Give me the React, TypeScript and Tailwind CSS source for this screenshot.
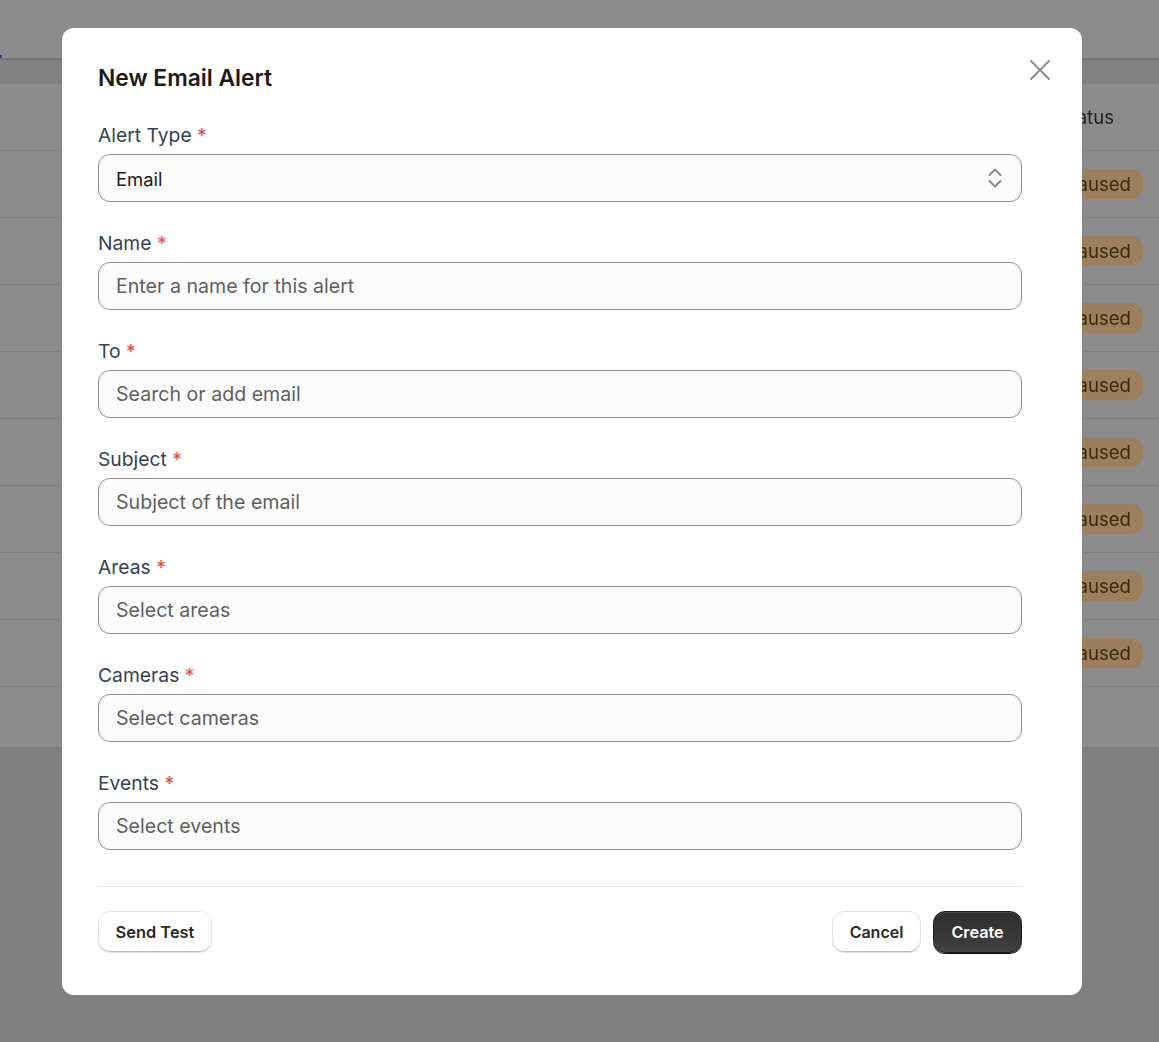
import { X } from "lucide-react";

const ROWS = [0, 1, 2, 3, 4, 5, 6, 7];

const FIELDS = [
  { label: "Name", placeholder: "Enter a name for this alert" },
  { label: "To", placeholder: "Search or add email" },
  { label: "Subject", placeholder: "Subject of the email" },
  { label: "Areas", placeholder: "Select areas" },
  { label: "Cameras", placeholder: "Select cameras" },
  { label: "Events", placeholder: "Select events" }
];

function FieldLabel({ text }: { text: string }) {
  return (
    <label className="block h-[28px] text-[19.3px] leading-[28px] text-[#364152]">
      {text} <span className="text-[#ef4444]">*</span>
    </label>
  );
}

function PageBehind() {
  return (
    <div className="h-[1042px] w-full overflow-hidden bg-[#808080] text-[18.6px] blur-[0.4px]">
      <div className="relative h-[60px] border-b-2 border-[#757575] bg-[#8c8c8c]">
        <div className="absolute bottom-0 left-0 h-[3px] w-[2px] bg-[#1d3fa8]" />
      </div>
      <div className="h-[24px] bg-[#818181]" />
      <div className="flex h-[67px] items-center justify-end border-b border-[#7c7c7c] bg-[#8b8b8b] pr-[45px] pt-[2px] text-[#1f1f1f]">
        Status
      </div>
      {ROWS.map((row) => (
        <div
          key={row}
          className="flex h-[67px] items-center justify-end border-b border-[#7c7c7c] bg-[#8b8b8b] pr-[16px]"
        >
          <span className="flex h-[30px] items-center rounded-[12px] bg-[#9c7f5c] px-[12px] pt-[2px] text-[#3d2a0c]">
            Paused
          </span>
        </div>
      ))}
      <div className="h-[60px] bg-[#8b8b8b]" />
    </div>
  );
}

export default function App() {
  return (
    <div className="relative h-[1042px] overflow-hidden font-['Inter',sans-serif]">
      <PageBehind />
      <div className="absolute inset-0 flex items-start justify-center pt-[28px] pr-[15px]">
        <div className="relative h-[967px] w-[1020px] rounded-[12px] bg-white pl-[36px] pr-[60px] pt-[34px]">
          <button
            type="button"
            className="absolute right-[24px] top-[24px] text-[#8c8c8c]"
            aria-label="Close"
          >
            <X className="h-[36px] w-[36px]" strokeWidth={1.3} />
          </button>
          <h2 className="h-[32px] text-[22.8px] font-semibold leading-[32px] text-[#1a1a1a]">
            New Email Alert
          </h2>
          <div className="mt-[27px]">
            <FieldLabel text="Alert Type" />
            <div className="mt-[5px] flex h-[48px] items-center justify-between rounded-[12px] border border-[#8f8f8f] bg-[#fcfcfc] pl-[17px] pr-[19px] text-[18.4px] text-[#1a1a1a]">
              <span className="pt-[3px]">Email</span>
              <svg width="14" height="20" viewBox="0 0 14 20" fill="none" stroke="#8a8a8a" strokeWidth="2" strokeLinecap="round" strokeLinejoin="round">
                <path d="M1.5 7 L7 1.5 L12.5 7" />
                <path d="M1.5 13 L7 18.5 L12.5 13" />
              </svg>
            </div>
          </div>
          {FIELDS.map((field) => (
            <div key={field.label} className="mt-[27px]">
              <FieldLabel text={field.label} />
              <div className="mt-[5px] flex h-[48px] items-center rounded-[12px] border border-[#8f8f8f] bg-[#fcfcfc] pl-[17px] pt-[2px] text-[19.6px] text-[#5f5f5f]">
                {field.placeholder}
              </div>
            </div>
          ))}
          <div className="mt-[36px] border-t border-[#e3e3e3]" />
          <div className="mt-[24px] flex items-center justify-between">
            <button
              type="button"
              className="h-[42px] w-[114px] rounded-[12px] border border-[#e2e2e2] bg-white text-[16.4px] font-semibold text-[#292929] shadow-[inset_0_-1px_0_#bdbdbd]"
            >
              Send Test
            </button>
            <div className="flex items-center gap-[12px]">
              <button
                type="button"
                className="h-[42px] w-[89px] rounded-[12px] border border-[#e2e2e2] bg-white text-[16px] font-semibold text-[#292929] shadow-[inset_0_-1px_0_#bdbdbd]"
              >
                Cancel
              </button>
              <button
                type="button"
                className="h-[42px] w-[89px] rounded-[12px] border border-[#1c1c1c] bg-gradient-to-b from-[#2e2e2e] to-[#404040] text-[16.2px] font-semibold text-white shadow-[inset_0_1px_0_#4a4a4a,0_1px_0_#111111]"
              >
                Create
              </button>
            </div>
          </div>
        </div>
      </div>
    </div>
  );
}
